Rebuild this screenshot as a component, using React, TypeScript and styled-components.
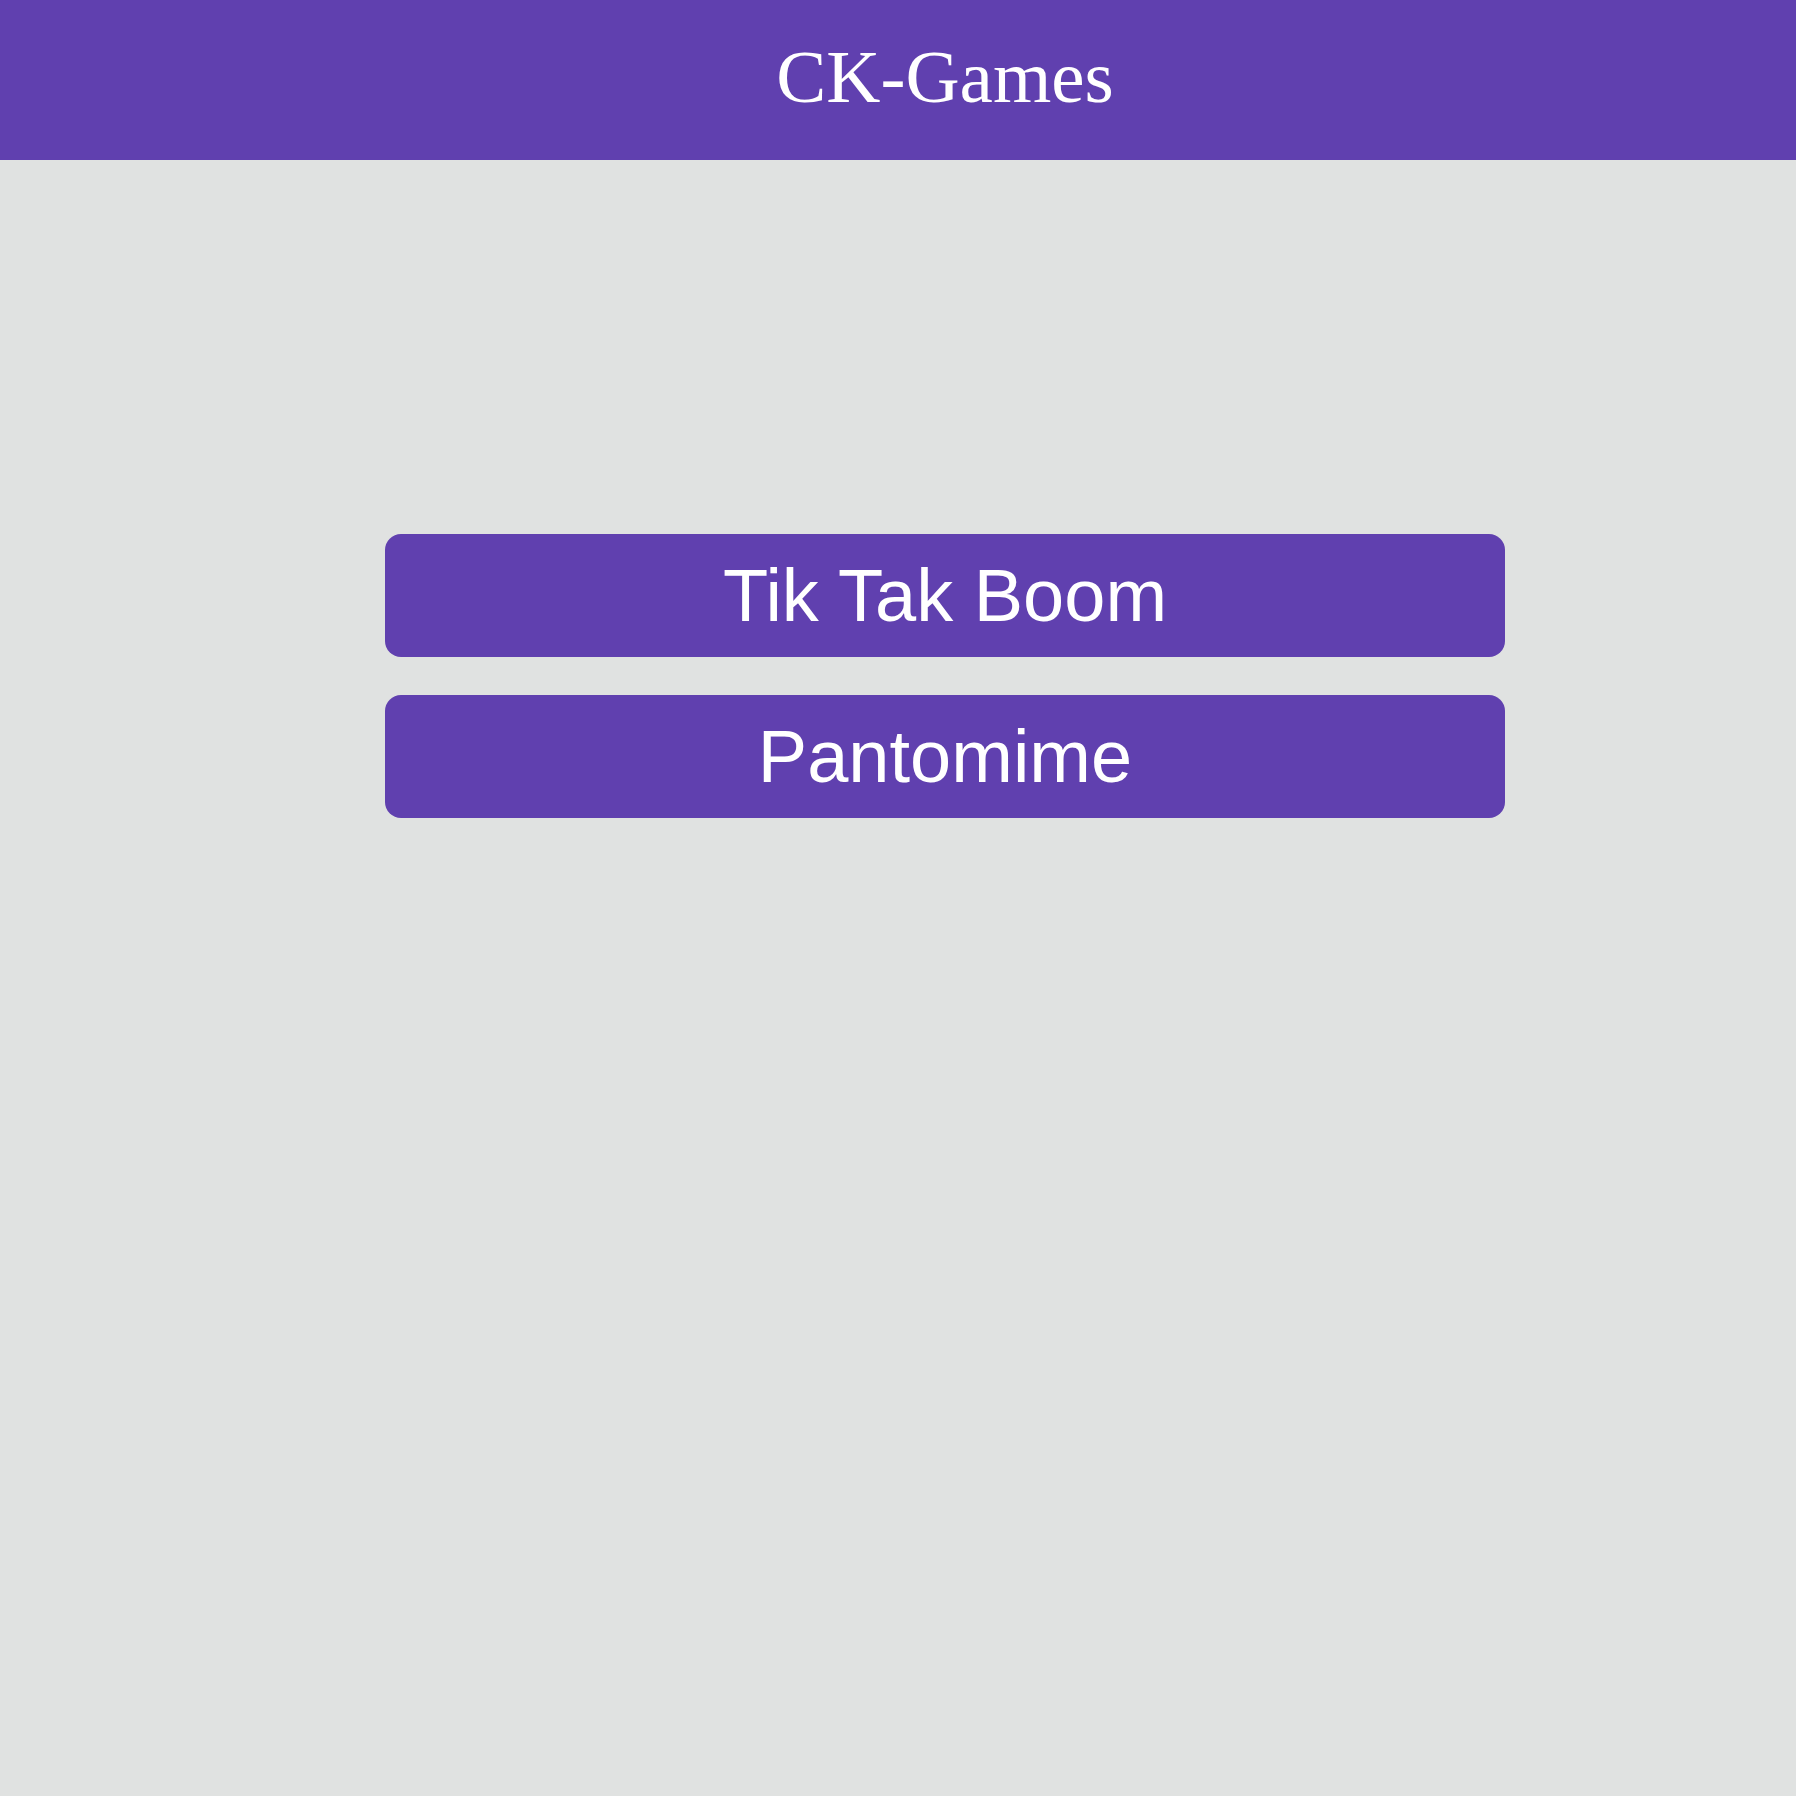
import React from "react";
import styled, { createGlobalStyle } from "styled-components";

const Global = createGlobalStyle`
  html, body { margin: 0; padding: 0; overflow: hidden; }
  body { background: #e0e2e1; }
`;

const Page = styled.div`
  min-height: 1796px;
  background: #e0e2e1;
`;

const Header = styled.header`
  height: 160px;
  box-sizing: border-box;
  padding: 0 0 8px 94px;
  background: #6040af;
  display: flex;
  align-items: center;
  justify-content: center;
`;

const Title = styled.h1`
  margin: 0;
  font-family: "Liberation Serif", serif;
  font-weight: 400;
  font-size: 75px;
  line-height: 1;
  color: #ffffff;
`;

const Menu = styled.main`
  display: flex;
  flex-direction: column;
  align-items: center;
  gap: 38px;
  padding: 374px 0 0 94px;
`;

const GameButton = styled.button`
  width: 1120px;
  height: 123px;
  border: none;
  border-radius: 16px;
  background: #6040af;
  color: #ffffff;
  font-family: "Liberation Sans", Arial, sans-serif;
  font-size: 74px;
  cursor: pointer;
  padding: 0;
`;

export default function App() {
  return (
    <Page>
      <Global />
      <Header>
        <Title>CK-Games</Title>
      </Header>
      <Menu>
        <GameButton>Tik Tak Boom</GameButton>
        <GameButton>Pantomime</GameButton>
      </Menu>
    </Page>
  );
}
